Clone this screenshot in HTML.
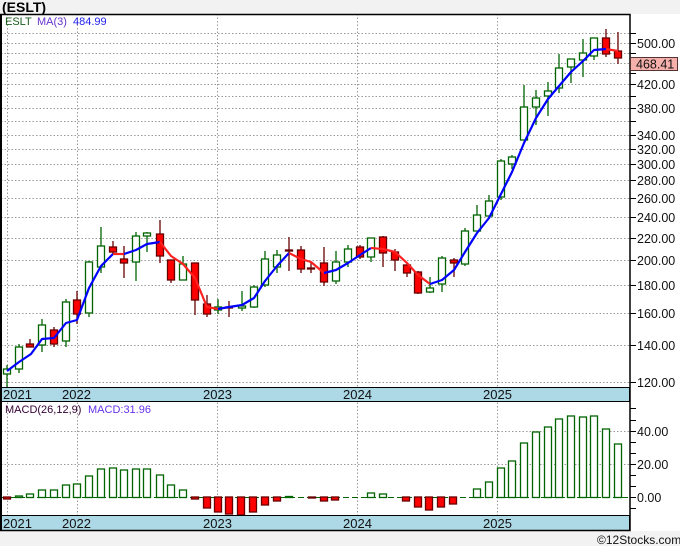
<!DOCTYPE html>
<html><head><meta charset="utf-8"><style>
html,body{margin:0;padding:0;background:#f2f2f2;}
svg{display:block;font-family:"Liberation Sans",sans-serif;}
</style></head><body>
<svg width="680" height="546" viewBox="0 0 680 546" xmlns="http://www.w3.org/2000/svg">
<rect x="0" y="14" width="680" height="517" fill="#fff"/>
<text x="2" y="12" font-size="14" font-weight="bold" fill="#000">(ESLT)</text>
<g stroke="#999" stroke-dasharray="1.5,2" stroke-width="1">
<line x1="1" x2="630" y1="33.5" y2="33.5"/><line x1="1" x2="630" y1="43.5" y2="43.5"/><line x1="1" x2="630" y1="53.5" y2="53.5"/><line x1="1" x2="630" y1="63.5" y2="63.5"/><line x1="1" x2="630" y1="73.5" y2="73.5"/><line x1="1" x2="630" y1="84.5" y2="84.5"/><line x1="1" x2="630" y1="96.5" y2="96.5"/><line x1="1" x2="630" y1="108.5" y2="108.5"/><line x1="1" x2="630" y1="121.5" y2="121.5"/><line x1="1" x2="630" y1="135.5" y2="135.5"/><line x1="1" x2="630" y1="149.5" y2="149.5"/><line x1="1" x2="630" y1="164.5" y2="164.5"/><line x1="1" x2="630" y1="180.5" y2="180.5"/><line x1="1" x2="630" y1="198.5" y2="198.5"/><line x1="1" x2="630" y1="217.5" y2="217.5"/><line x1="1" x2="630" y1="238.5" y2="238.5"/><line x1="1" x2="630" y1="260.5" y2="260.5"/><line x1="1" x2="630" y1="285.5" y2="285.5"/><line x1="1" x2="630" y1="313.5" y2="313.5"/><line x1="1" x2="630" y1="345.5" y2="345.5"/><line x1="1" x2="630" y1="382.5" y2="382.5"/>
<line x1="1" x2="630" y1="431.5" y2="431.5"/><line x1="1" x2="630" y1="464.5" y2="464.5"/>
<line x1="77.5" x2="77.5" y1="14" y2="530"/><line x1="217.5" x2="217.5" y1="14" y2="530"/><line x1="357.5" x2="357.5" y1="14" y2="530"/><line x1="497.5" x2="497.5" y1="14" y2="530"/><line x1="7.5" x2="7.5" y1="14" y2="530"/>
</g>
<g stroke-width="1.3">
<g stroke="#006400" fill="#fff">
<line x1="7" x2="7" y1="365" y2="387"/><rect x="3.5" y="369" width="7" height="5"/>
<line x1="19" x2="19" y1="344" y2="373"/><rect x="15.5" y="347" width="7" height="22"/>
<line x1="42" x2="42" y1="319" y2="352"/><rect x="38.5" y="325" width="7" height="20"/>
<line x1="66" x2="66" y1="299" y2="347"/><rect x="62.5" y="302" width="7" height="39"/>
<line x1="89" x2="89" y1="261" y2="317"/><rect x="85.5" y="262" width="7" height="51"/>
<line x1="101" x2="101" y1="227" y2="273"/><rect x="97.5" y="246" width="7" height="21"/>
<line x1="136" x2="136" y1="232" y2="281"/><rect x="132.5" y="236" width="7" height="26"/>
<line x1="147" x2="147" y1="232" y2="252"/><rect x="143.5" y="233" width="7" height="3"/>
<line x1="183" x2="183" y1="256" y2="280"/><rect x="179.5" y="264" width="7" height="16"/>
<line x1="218" x2="218" y1="299" y2="314"/><rect x="214.5" y="307" width="7" height="3"/>
<line x1="242" x2="242" y1="291" y2="311"/><rect x="238.5" y="306" width="7" height="2"/>
<line x1="254" x2="254" y1="285" y2="308"/><rect x="250.5" y="287" width="7" height="20"/>
<line x1="265" x2="265" y1="251" y2="287"/><rect x="261.5" y="259" width="7" height="26"/>
<line x1="277" x2="277" y1="250" y2="273"/><rect x="273.5" y="255" width="7" height="12"/>
<line x1="336" x2="336" y1="251" y2="284"/><rect x="332.5" y="262" width="7" height="19"/>
<line x1="348" x2="348" y1="245" y2="267"/><rect x="344.5" y="249" width="7" height="13"/>
<line x1="371" x2="371" y1="238" y2="262"/><rect x="367.5" y="238" width="7" height="19"/>
<line x1="430" x2="430" y1="277" y2="293"/><rect x="426.5" y="288" width="7" height="4"/>
<line x1="442" x2="442" y1="256" y2="292"/><rect x="438.5" y="258" width="7" height="26"/>
<line x1="465" x2="465" y1="228" y2="266"/><rect x="461.5" y="231" width="7" height="33"/>
<line x1="477" x2="477" y1="205" y2="231"/><rect x="473.5" y="215" width="7" height="16"/>
<line x1="489" x2="489" y1="195" y2="216"/><rect x="485.5" y="201" width="7" height="15"/>
<line x1="501" x2="501" y1="159" y2="200"/><rect x="497.5" y="161" width="7" height="36"/>
<line x1="512" x2="512" y1="155" y2="169"/><rect x="508.5" y="157" width="7" height="7"/>
<line x1="524" x2="524" y1="85" y2="140"/><rect x="520.5" y="107" width="7" height="33"/>
<line x1="536" x2="536" y1="90" y2="125"/><rect x="532.5" y="98" width="7" height="9"/>
<line x1="548" x2="548" y1="82" y2="116"/><rect x="544.5" y="91" width="7" height="5"/>
<line x1="559" x2="559" y1="54" y2="93"/><rect x="555.5" y="68" width="7" height="20"/>
<line x1="571" x2="571" y1="59" y2="83"/><rect x="567.5" y="59" width="7" height="8"/>
<line x1="583" x2="583" y1="39" y2="77"/><rect x="579.5" y="53" width="7" height="7"/>
<line x1="594" x2="594" y1="38" y2="60"/><rect x="590.5" y="38" width="7" height="18"/>
</g>
<g stroke="#660000" fill="#f00">
<line x1="30" x2="30" y1="339" y2="347"/><rect x="26.5" y="344" width="7" height="3"/>
<line x1="54" x2="54" y1="327" y2="347"/><rect x="50.5" y="330" width="7" height="14"/>
<line x1="77" x2="77" y1="291" y2="324"/><rect x="73.5" y="300" width="7" height="14"/>
<line x1="113" x2="113" y1="241" y2="254"/><rect x="109.5" y="247" width="7" height="5"/>
<line x1="124" x2="124" y1="246" y2="278"/><rect x="120.5" y="259" width="7" height="4"/>
<line x1="160" x2="160" y1="220" y2="263"/><rect x="156.5" y="234" width="7" height="22"/>
<line x1="171" x2="171" y1="260" y2="283"/><rect x="167.5" y="260" width="7" height="20"/>
<line x1="195" x2="195" y1="263" y2="315"/><rect x="191.5" y="263" width="7" height="37"/>
<line x1="207" x2="207" y1="295" y2="317"/><rect x="203.5" y="304" width="7" height="10"/>
<line x1="229" x2="229" y1="301" y2="317"/><rect x="225.5" y="307" width="7" height="1"/>
<line x1="289" x2="289" y1="237" y2="271"/><rect x="285.5" y="250" width="7" height="1"/>
<line x1="301" x2="301" y1="246" y2="273"/><rect x="297.5" y="250" width="7" height="19"/>
<line x1="311" x2="311" y1="262" y2="273"/><rect x="307.5" y="268" width="7" height="1"/>
<line x1="324" x2="324" y1="247" y2="286"/><rect x="320.5" y="263" width="7" height="19"/>
<line x1="360" x2="360" y1="245" y2="259"/><rect x="356.5" y="247" width="7" height="10"/>
<line x1="383" x2="383" y1="236" y2="267"/><rect x="379.5" y="237" width="7" height="16"/>
<line x1="395" x2="395" y1="249" y2="271"/><rect x="391.5" y="252" width="7" height="8"/>
<line x1="407" x2="407" y1="263" y2="277"/><rect x="403.5" y="265" width="7" height="8"/>
<line x1="418" x2="418" y1="271" y2="294"/><rect x="414.5" y="272" width="7" height="21"/>
<line x1="454" x2="454" y1="258" y2="277"/><rect x="450.5" y="260" width="7" height="3"/>
<line x1="606" x2="606" y1="29" y2="57"/><rect x="602.5" y="38" width="7" height="16"/>
<line x1="618" x2="618" y1="32" y2="64"/><rect x="614.5" y="51" width="7" height="7"/>
</g>
</g>
<g fill="none" stroke-width="2.2" stroke-linejoin="round">
<polyline stroke="#0000ff" points="7,371 19,362 31,354 42,339 54,338 66,323 77,320 89,288 101,266 113,254"/>
<polyline stroke="#ff2020" points="113,254 124,254"/>
<polyline stroke="#0000ff" points="124,254 136,250 147,244 160,242"/>
<polyline stroke="#ff2020" points="160,242 171,256 183,264 195,278 207,307 218,309"/>
<polyline stroke="#0000ff" points="218,309 229,307 242,305 254,298 265,281 277,266 289,253"/>
<polyline stroke="#ff2020" points="289,253 301,259 311,262 324,273"/>
<polyline stroke="#0000ff" points="324,273 336,270 348,263 360,255 371,248"/>
<polyline stroke="#ff2020" points="371,248 383,249 395,252 407,263 418,275 430,284"/>
<polyline stroke="#0000ff" points="430,284 442,280 454,270 465,252 477,233 489,218 501,194 512,172 524,143 536,118 548,99 559,86 571,72 583,61 594,50 606,49"/>
<polyline stroke="#ff2020" points="606,49 618,51"/>
</g>
<text x="5" y="25" font-size="11"><tspan fill="#1a5c1a">ESLT</tspan><tspan x="37" fill="#6633cc">MA(3)</tspan><tspan x="73" fill="#2222ee">484.99</tspan></text>
<line x1="1" x2="630" y1="497.5" y2="497.5" stroke="#006400" stroke-dasharray="6,3" stroke-width="1"/>
<g stroke-width="1.3">
<g stroke="#006400" fill="#fff">
<rect x="15.5" y="496" width="7" height="1.5"/><rect x="26.5" y="494" width="7" height="3.5"/><rect x="38.5" y="490" width="7" height="7.5"/><rect x="50.5" y="490" width="7" height="7.5"/><rect x="62.5" y="485" width="7" height="12.5"/><rect x="73.5" y="484" width="7" height="13.5"/><rect x="85.5" y="476" width="7" height="21.5"/><rect x="97.5" y="469" width="7" height="28.5"/><rect x="109.5" y="468" width="7" height="29.5"/><rect x="120.5" y="470" width="7" height="27.5"/><rect x="132.5" y="469" width="7" height="28.5"/><rect x="143.5" y="469" width="7" height="28.5"/><rect x="156.5" y="475" width="7" height="22.5"/><rect x="167.5" y="485" width="7" height="12.5"/><rect x="179.5" y="490" width="7" height="7.5"/>
<rect x="285.5" y="496.5" width="7" height="1"/><rect x="367.5" y="493" width="7" height="4.5"/><rect x="379.5" y="494" width="7" height="3.5"/>
<rect x="473.5" y="489" width="7" height="8.5"/><rect x="485.5" y="482" width="7" height="15.5"/><rect x="497.5" y="468" width="7" height="29.5"/><rect x="508.5" y="461" width="7" height="36.5"/><rect x="520.5" y="443" width="7" height="54.5"/><rect x="532.5" y="432" width="7" height="65.5"/><rect x="544.5" y="427" width="7" height="70.5"/><rect x="555.5" y="419" width="7" height="78.5"/><rect x="567.5" y="416" width="7" height="81.5"/><rect x="579.5" y="417" width="7" height="80.5"/><rect x="590.5" y="416" width="7" height="81.5"/><rect x="602.5" y="429" width="7" height="68.5"/><rect x="614.5" y="444" width="7" height="53.5"/>
</g>
<g stroke="#660000" fill="#f00">
<rect x="3.5" y="497" width="7" height="2"/><rect x="191.5" y="497" width="7" height="2"/><rect x="203.5" y="497" width="7" height="11"/><rect x="214.5" y="497" width="7" height="15"/><rect x="225.5" y="497" width="7" height="17"/><rect x="237.5" y="497" width="7" height="18"/><rect x="249.5" y="497" width="7" height="15"/><rect x="261.5" y="497" width="7" height="8"/><rect x="273.5" y="497" width="7" height="4"/><rect x="308.5" y="497" width="7" height="1"/><rect x="320.5" y="497" width="7" height="4"/><rect x="331.5" y="497" width="7" height="3"/><rect x="402.5" y="497" width="7" height="4"/><rect x="414.5" y="497" width="7" height="10"/><rect x="425.5" y="497" width="7" height="13"/><rect x="437.5" y="497" width="7" height="10"/><rect x="449.5" y="497" width="7" height="7"/>
</g>
</g>
<text x="5" y="413" font-size="11"><tspan fill="#330033">MACD(26,12,9)</tspan><tspan x="88" fill="#6633ee">MACD:31.96</tspan></text>
<rect x="0.5" y="387.5" width="629" height="14" fill="#add8e6" stroke="#000"/>
<rect x="0.5" y="515.5" width="629" height="15" fill="#add8e6" stroke="#000"/>
<g font-size="13" fill="#111">
<text x="3" y="399">2021</text><text x="62" y="399">2022</text><text x="203" y="399">2023</text><text x="343" y="399">2024</text><text x="483" y="399">2025</text>
<text x="3" y="528">2021</text><text x="62" y="528">2022</text><text x="203" y="528">2023</text><text x="343" y="528">2024</text><text x="483" y="528">2025</text>
</g>
<rect x="0.5" y="14.5" width="629.5" height="516" fill="none" stroke="#000" stroke-width="1.5"/>
<line x1="1" x2="1" y1="14" y2="531" stroke="#000" stroke-width="2"/>
<g stroke="#000" stroke-width="1">
<line x1="630" x2="636" y1="33.5" y2="33.5"/><line x1="630" x2="636" y1="43.5" y2="43.5"/><line x1="630" x2="636" y1="53.5" y2="53.5"/><line x1="630" x2="636" y1="73.5" y2="73.5"/><line x1="630" x2="636" y1="84.5" y2="84.5"/><line x1="630" x2="636" y1="96.5" y2="96.5"/><line x1="630" x2="636" y1="108.5" y2="108.5"/><line x1="630" x2="636" y1="121.5" y2="121.5"/><line x1="630" x2="636" y1="135.5" y2="135.5"/><line x1="630" x2="636" y1="149.5" y2="149.5"/><line x1="630" x2="636" y1="164.5" y2="164.5"/><line x1="630" x2="636" y1="180.5" y2="180.5"/><line x1="630" x2="636" y1="198.5" y2="198.5"/><line x1="630" x2="636" y1="217.5" y2="217.5"/><line x1="630" x2="636" y1="238.5" y2="238.5"/><line x1="630" x2="636" y1="260.5" y2="260.5"/><line x1="630" x2="636" y1="285.5" y2="285.5"/><line x1="630" x2="636" y1="313.5" y2="313.5"/><line x1="630" x2="636" y1="345.5" y2="345.5"/><line x1="630" x2="636" y1="382.5" y2="382.5"/>
<line x1="630" x2="636" y1="408.5" y2="408.5"/><line x1="630" x2="636" y1="420.5" y2="420.5"/><line x1="630" x2="636" y1="431.5" y2="431.5"/><line x1="630" x2="636" y1="442.5" y2="442.5"/><line x1="630" x2="636" y1="453.5" y2="453.5"/><line x1="630" x2="636" y1="464.5" y2="464.5"/><line x1="630" x2="636" y1="475.5" y2="475.5"/><line x1="630" x2="636" y1="486.5" y2="486.5"/><line x1="630" x2="636" y1="497.5" y2="497.5"/><line x1="630" x2="636" y1="508.5" y2="508.5"/>
</g>
<g font-size="12.5" fill="#111">
<text x="637" y="48">500.00</text><text x="637" y="89">420.00</text><text x="637" y="113">380.00</text><text x="637" y="140">340.00</text><text x="637" y="154">320.00</text><text x="637" y="169">300.00</text><text x="637" y="185">280.00</text><text x="637" y="203">260.00</text><text x="637" y="222">240.00</text><text x="637" y="243">220.00</text><text x="637" y="265">200.00</text><text x="637" y="290">180.00</text><text x="637" y="318">160.00</text><text x="637" y="350">140.00</text><text x="637" y="387">120.00</text>
<text x="637" y="436">40.00</text><text x="637" y="469">20.00</text><text x="637" y="502">0.00</text>
</g>
<rect x="630.5" y="57.5" width="47" height="13" fill="#f6b0ac" stroke="#553333"/>
<text x="636" y="68.5" font-size="12.5" fill="#111">468.41</text>
<text x="597" y="544" font-size="12" fill="#111">©12Stocks.com</text>
</svg>
</body></html>
